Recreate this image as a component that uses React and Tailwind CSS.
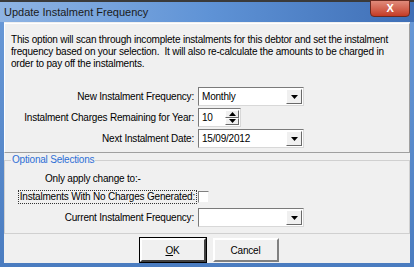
import { useState } from 'react';

function DropArrow() {
  return (
    <div className="w-[16px] h-full bg-[#f0f0f0] border border-t-white border-l-white border-r-[#696969] border-b-[#696969] flex items-center justify-center">
      <svg width="7" height="4" viewBox="0 0 7 4">
        <path d="M0 0 H7 L3.5 4 Z" fill="#000" />
      </svg>
    </div>
  );
}

function Combo({ value }) {
  return (
    <div className="w-[106px] h-[19px] bg-white border border-[#7a7a7a] border-r-[#d8d8d8] border-b-[#d8d8d8] flex items-stretch p-[1px]">
      <span className="flex-1 pl-[2px] leading-[15px]">{value}</span>
      <DropArrow />
    </div>
  );
}

function Spinner({ value }) {
  return (
    <div className="w-[43px] h-[19px] bg-white border border-[#7a7a7a] border-r-[#d8d8d8] border-b-[#d8d8d8] flex items-stretch p-[1px]">
      <span className="flex-1 pl-[2px] leading-[15px]">{value}</span>
      <div className="w-[14px] flex flex-col">
        <div className="flex-1 bg-[#f0f0f0] border border-t-white border-l-white border-r-[#696969] border-b-[#696969] flex items-center justify-center">
          <svg width="7" height="4" viewBox="0 0 7 4"><path d="M0 4 H7 L3.5 0 Z" fill="#000" /></svg>
        </div>
        <div className="flex-1 bg-[#f0f0f0] border border-t-white border-l-white border-r-[#696969] border-b-[#696969] flex items-center justify-center">
          <svg width="7" height="4" viewBox="0 0 7 4"><path d="M0 0 H7 L3.5 4 Z" fill="#000" /></svg>
        </div>
      </div>
    </div>
  );
}

export default function App() {
  const [noCharges, setNoCharges] = useState(false);

  return (
    <div
      className="w-[414px] h-[267px] flex flex-col bg-gradient-to-b from-[#6a9ad8] to-[#4a7cc0] text-[10px] tracking-[-0.2px] text-black overflow-hidden"
      style={{ fontFamily: '"Liberation Sans", Arial, sans-serif' }}
    >
      {/* Title bar */}
      <div className="h-[22px] shrink-0 flex items-center relative border-t-[2px] border-[#3a3a3a] bg-gradient-to-r from-[#8fb4e3] via-[#5f93d6] to-[#3f6fb6]">
        <span className="pl-[4px] text-[11px] tracking-normal text-[#1a1a1a]">Update Instalment Frequency</span>
        <div className="absolute right-[4px] top-[-2px] w-[40px] h-[17px] rounded-b-[4px] bg-gradient-to-b from-[#e08a7a] to-[#c43a24] border border-[#6b2a20] flex items-center justify-center">
          <span className="text-white font-bold text-[11px]">X</span>
        </div>
      </div>

      {/* Client area */}
      <div className="flex-1 mx-[4px] mb-[4px] bg-[#f0f0f0] flex flex-col">
        {/* Top panel */}
        <div className="h-[130px] shrink-0 mt-[1px] border border-t-white border-l-white border-r-[#a0a0a0] border-b-[#a0a0a0] pt-[10px]">
          <p className="leading-[12px] px-[6px]">
            This option will scan through incomplete instalments for this debtor and set the instalment frequency based on your selection.&nbsp; It will also re-calculate the amounts to be charged in order to pay off the instalments.
          </p>
          <div className="mt-[17px] grid grid-cols-[189px_auto] gap-x-[4px] gap-y-[2px] items-center">
            <span className="text-right whitespace-nowrap">New Instalment Frequency:</span>
            <Combo value="Monthly" />
            <span className="text-right whitespace-nowrap">Instalment Charges Remaining for Year:</span>
            <Spinner value="10" />
            <span className="text-right whitespace-nowrap">Next Instalment Date:</span>
            <Combo value="15/09/2012" />
          </div>
        </div>

        {/* Optional Selections group */}
        <div className="mt-[7px] h-[74px] shrink-0 border border-[#d0d0d0] relative pt-[11px]">
          <span className="absolute left-[6px] top-[-7px] leading-[12px] bg-[#f0f0f0] px-[1px] text-[#2d6fd6]">Optional Selections</span>
          <div className="grid grid-cols-[189px_auto] gap-x-[4px] gap-y-[4px] items-center">
            <span className="col-span-2 pl-[40px] leading-[14px]">Only apply change to:-</span>
            <span className="text-right whitespace-nowrap leading-[12px]">
              <span className="-mr-[3px] inline-block border border-dotted border-[#333] px-[1px]">Instalments With No Charges Generated:</span>
            </span>
            <button
              onClick={() => setNoCharges(!noCharges)}
              className="w-[11px] h-[12px] bg-white border border-t-[#808080] border-l-[#808080] border-r-[#f0f0f0] border-b-[#f0f0f0] text-[9px] leading-[9px]"
            >
              {noCharges ? '✓' : ''}
            </button>
            <span className="text-right whitespace-nowrap">Current Instalment Frequency:</span>
            <Combo value="" />
          </div>
        </div>

        {/* Buttons */}
        <div className="flex-1 flex items-start justify-center gap-[7px] pl-[4px] pt-[4px]">
          <button className="w-[66px] h-[24px] bg-[#f0f0f0] border-2 border-t-white border-l-white border-r-[#404040] border-b-[#404040] outline outline-1 outline-black">
            <span className="underline">O</span>K
          </button>
          <button className="w-[66px] h-[24px] bg-[#f0f0f0] border-2 border-t-white border-l-white border-r-[#808080] border-b-[#808080]">
            Cancel
          </button>
        </div>
      </div>
    </div>
  );
}
